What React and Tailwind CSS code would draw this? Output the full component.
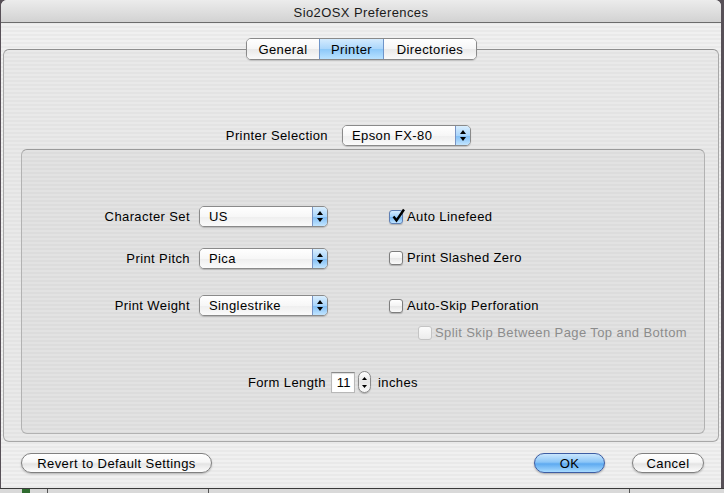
import React from 'react'

// Aqua-era preferences window (10.4 pinstripe look)
const windowStripes =
  'bg-[repeating-linear-gradient(to_bottom,#f0f0f0_0px,#f0f0f0_2px,#e9e9e9_2px,#e9e9e9_4px)]'
const tabBoxStripes =
  'bg-[repeating-linear-gradient(to_bottom,#e9e9e9_0px,#e9e9e9_2px,#e3e3e3_2px,#e3e3e3_4px)]'
const groupStripes =
  'bg-[repeating-linear-gradient(to_bottom,#e2e2e2_0px,#e2e2e2_2px,#dcdcdc_2px,#dcdcdc_4px)]'

function Arrows({ color = '#000' }) {
  return (
    <div className="flex flex-col items-center gap-[3px]">
      <svg width="6" height="4" viewBox="0 0 6 4">
        <path d="M3 0 L6 4 L0 4 Z" fill={color} />
      </svg>
      <svg width="6" height="4" viewBox="0 0 6 4">
        <path d="M0 0 L6 0 L3 4 Z" fill={color} />
      </svg>
    </div>
  )
}

function Popup({ value }) {
  return (
    <div className="w-[129px] h-[21px] flex rounded-[5px] border border-[#8a8a8a] overflow-hidden shadow-[0_1px_1px_rgba(0,0,0,0.18)]">
      <div className="flex-1 flex items-center pl-[9px] bg-[linear-gradient(to_bottom,#ffffff_0%,#f7f7f7_50%,#eeeeee_51%,#fbfbfb_100%)]">
        {value}
      </div>
      <div className="w-[15px] flex items-center justify-center border-l border-[#7894c4] bg-[linear-gradient(to_bottom,#d9eefe_0%,#a9d5fb_50%,#7fbdf5_51%,#c2e5ff_100%)]">
        <Arrows />
      </div>
    </div>
  )
}

function Checkbox({ checked, disabled }) {
  return (
    <span
      className={
        disabled
          ? 'relative w-[14px] h-[14px] shrink-0 rounded-[3px] border border-[#c4c4c4] bg-[linear-gradient(to_bottom,#fbfbfb,#ececec)]'
          : checked
            ? 'relative w-[14px] h-[14px] shrink-0 rounded-[3px] border border-[#5f7fb4] bg-[linear-gradient(to_bottom,#d3ebfe_0%,#9ccefa_50%,#72b6f4_51%,#bfe3ff_100%)] shadow-[0_1px_1px_rgba(0,0,0,0.2)]'
            : 'relative w-[14px] h-[14px] shrink-0 rounded-[3px] border border-[#7d7d7d] bg-[linear-gradient(to_bottom,#ffffff_0%,#f3f3f3_50%,#e6e6e6_51%,#fafafa_100%)] shadow-[0_1px_1px_rgba(0,0,0,0.2)]'
      }
    >
      {checked && (
        <svg className="absolute left-[1px] -top-[3px]" width="15" height="15" viewBox="0 0 15 15">
          <path d="M2.5 8.5 L5.5 12.5 L13 1.5" stroke="#000" strokeWidth="2.4" fill="none" />
        </svg>
      )}
    </span>
  )
}

function AquaButton({ children, width, primary }) {
  return (
    <button
      className={
        primary
          ? `${width} h-[20px] rounded-full border border-[#3d5da3] bg-[linear-gradient(to_bottom,#c9e6fd_0%,#8cc6f7_45%,#5eaaf0_55%,#a8dbff_100%)] shadow-[0_1px_2px_rgba(0,0,0,0.3)] flex items-center justify-center text-black`
          : `${width} h-[20px] rounded-full border border-[#808080] bg-[linear-gradient(to_bottom,#ffffff_0%,#f6f6f6_45%,#e4e4e4_55%,#fdfdfd_100%)] shadow-[0_1px_2px_rgba(0,0,0,0.25)] flex items-center justify-center text-black`
      }
    >
      {children}
    </button>
  )
}

const tabs = [
  { label: 'General', width: 'w-[72px]' },
  { label: 'Printer', width: 'w-[65px]', active: true },
  { label: 'Directories', width: 'w-[92px]' },
]

export default function App() {
  return (
    <div className="w-[724px] h-[493px] overflow-hidden bg-[#575057] font-['Liberation_Sans',Arial,sans-serif] text-[13px] tracking-[0.4px] text-black leading-none">
      <div className={`ml-[1px] w-[720px] h-[488px] rounded-t-[6px] flex flex-col ${windowStripes}`}>
        {/* title bar */}
        <div className="h-[23px] shrink-0 rounded-t-[6px] border-b border-[#6c6c6c] bg-[linear-gradient(to_bottom,#ececec,#d2d2d2)] flex items-center justify-center">
          <span className="text-[#1a1a1a] pt-[2px]">Sio2OSX Preferences</span>
        </div>

        {/* tab view */}
        <div className="mt-[15px] flex justify-center relative z-10">
          <div className="flex h-[22px] rounded-[5px] border border-[#8a8a8a] overflow-hidden shadow-[0_1px_1px_rgba(0,0,0,0.15)] ml-[1px]">
            {tabs.map(({ label, width, active }) => (
              <div
                key={label}
                className={
                  (active
                    ? 'bg-[linear-gradient(to_bottom,#d4ebfe_0%,#aad6fb_50%,#8cc8f8_51%,#b9e2ff_100%)] border-x border-[#6f95c9] '
                    : 'bg-[linear-gradient(to_bottom,#ffffff_0%,#f6f6f6_50%,#e9e9e9_51%,#fafafa_100%)] ') +
                  `${width} flex items-center justify-center`
                }
              >
                {label}
              </div>
            ))}
          </div>
        </div>

        <div className={`-mt-[11px] ml-[2px] w-[716px] h-[393px] shrink-0 rounded-[6px] border border-[#a8a8a8] border-t-[#8e8e8e] ${tabBoxStripes} pt-[75px]`}>
          {/* printer selection */}
          <div className="flex items-center h-[21px]">
            <span className="w-[324px] text-right">Printer Selection</span>
            <div className="ml-[14px]">
              <Popup value="Epson FX-80" />
            </div>
          </div>

          {/* printer options group */}
          <div className={`mt-[3px] ml-[17px] w-[684px] h-[285px] rounded-[6px] border border-[#b2b2b2] border-t-[#9a9a9a] ${groupStripes} pt-[56px] flex flex-col`}>
            <div className="flex items-center h-[21px]">
              <span className="w-[168px] text-right">Character Set</span>
              <div className="ml-[9px]"><Popup value="US" /></div>
              <div className="ml-[61px] flex items-center">
                <Checkbox checked />
                <span className="ml-[4px]">Auto Linefeed</span>
              </div>
            </div>

            <div className="mt-[21px] flex items-center h-[21px]">
              <span className="w-[168px] text-right">Print Pitch</span>
              <div className="ml-[9px]"><Popup value="Pica" /></div>
              <div className="ml-[61px] flex items-center -mt-[2px]">
                <Checkbox />
                <span className="ml-[4px]">Print Slashed Zero</span>
              </div>
            </div>

            <div className="mt-[26px] flex items-center h-[21px]">
              <span className="w-[168px] text-right">Print Weight</span>
              <div className="ml-[9px]"><Popup value="Singlestrike" /></div>
              <div className="ml-[61px] flex items-center">
                <Checkbox />
                <span className="ml-[4px]">Auto-Skip Perforation</span>
              </div>
            </div>

            <div className="mt-[6px] ml-[396px] flex items-center h-[21px] text-[#8c8c8c]">
              <Checkbox disabled />
              <span className="ml-[3px]">Split Skip Between Page Top and Bottom</span>
            </div>

            {/* form length */}
            <div className="mt-[28px] flex items-center h-[22px]">
              <span className="w-[304px] text-right">Form Length</span>
              <div className="ml-[5px] w-[24px] h-[21px] bg-white border border-[#b8b8b8] border-t-[#8a8a8a] shadow-[inset_0_1px_1px_rgba(0,0,0,0.15)] flex items-center justify-end pr-[3px]">
                11
              </div>
              <div className="ml-[3px] w-[13px] h-[22px] rounded-full border border-[#8a8a8a] bg-[linear-gradient(to_bottom,#ffffff,#e6e6e6_50%,#fafafa)] flex flex-col items-center justify-center gap-[5px] shadow-[0_1px_1px_rgba(0,0,0,0.2)]">
                <svg width="5" height="3" viewBox="0 0 5 3"><path d="M2.5 0 L5 3 L0 3 Z" fill="#000" /></svg>
                <svg width="5" height="3" viewBox="0 0 5 3"><path d="M0 0 L5 0 L2.5 3 Z" fill="#000" /></svg>
              </div>
              <span className="ml-[7px]">inches</span>
            </div>
          </div>
        </div>

        {/* bottom buttons */}
        <div className="mt-[11px] flex items-center">
          <div className="ml-[20px]">
            <AquaButton width="w-[191px]">Revert to Default Settings</AquaButton>
          </div>
          <div className="ml-auto">
            <AquaButton width="w-[71px]" primary>OK</AquaButton>
          </div>
          <div className="ml-[27px] mr-[17px]">
            <AquaButton width="w-[72px]">Cancel</AquaButton>
          </div>
        </div>
      </div>

      {/* window underneath */}
      <div className="h-[5px] flex bg-[#d9d9d9] border-t border-[#3a3a3a]">
        <div className="ml-[22px] w-[8px] bg-[#2f6b2f]" />
        <div className="ml-[17px] w-[1px] bg-[#555]" />
        <div className="ml-[160px] w-[1px] bg-[#555]" />
        <div className="ml-[420px] w-[1px] bg-[#555]" />
      </div>
    </div>
  )
}
